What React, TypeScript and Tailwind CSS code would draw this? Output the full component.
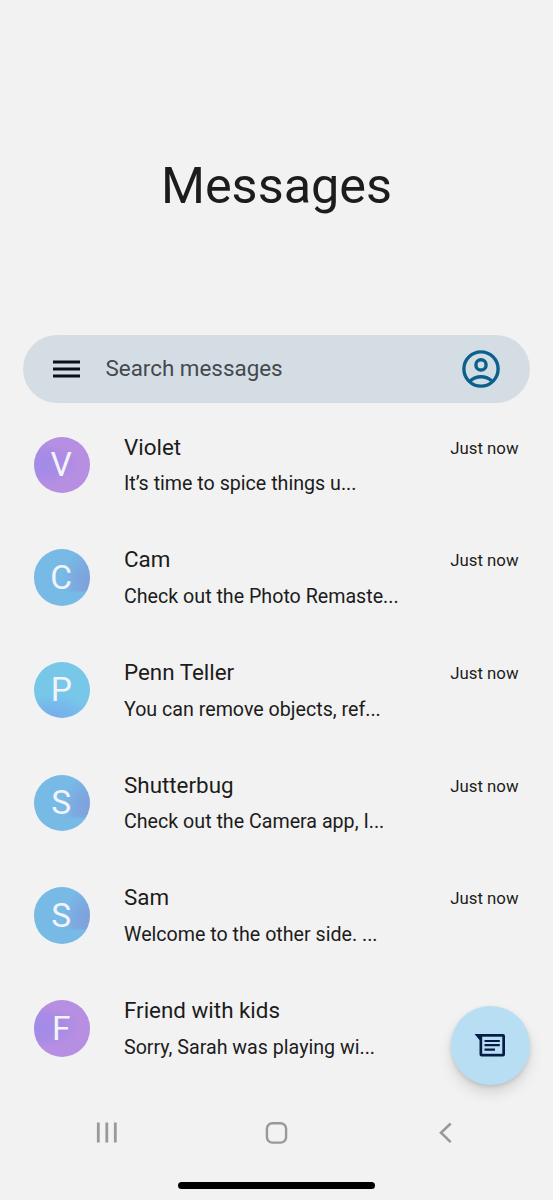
import React from 'react';

interface Conversation {
    name: string;
    preview: string;
    time?: string;
    tone: 'violet' | 'blue' | 'sky';
}

const CONVERSATIONS: Conversation[] = [
    { name: 'Violet', preview: 'It’s time to spice things u...', time: 'Just now', tone: 'violet' },
    { name: 'Cam', preview: 'Check out the Photo Remaste...', time: 'Just now', tone: 'blue' },
    { name: 'Penn Teller', preview: 'You can remove objects, ref...', time: 'Just now', tone: 'sky' },
    { name: 'Shutterbug', preview: 'Check out the Camera app, I...', time: 'Just now', tone: 'blue' },
    { name: 'Sam', preview: 'Welcome to the other side. ...', time: 'Just now', tone: 'blue' },
    { name: 'Friend with kids', preview: 'Sorry, Sarah was playing wi...', tone: 'violet' },
];

const TONES: Record<Conversation['tone'], string> = {
    violet: 'bg-[radial-gradient(ellipse_44px_22px_at_3px_27px,#a08ce8_0%,#a98be5_60%,#b78fe2_100%)]',
    blue: 'bg-[linear-gradient(to_bottom,transparent_42px,#77bae6_43px),radial-gradient(ellipse_28px_34px_at_56px_33px,#829fda_0%,#7ca9e0_50%,#77bae6_100%)]',
    sky: 'bg-[radial-gradient(ellipse_46px_26px_at_18px_58px,#79a9ed_0%,#77b5ec_45%,#77c7e9_100%)]',
};

function Avatar({ name, tone }: { name: string; tone: Conversation['tone'] }) {
    return (
        <div className={`mt-[3.3px] flex h-[56.5px] w-[56.5px] shrink-0 items-center justify-center rounded-full pr-px text-[33.5px] leading-none text-[#f3f3fb] ${TONES[tone]}`}>
            {name[0]}
        </div>
    );
}

function ConversationRow({ name, preview, time, tone }: Conversation) {
    return (
        <li className="flex h-[112.7px] items-start pr-[34.5px] pl-[33.5px]">
            <Avatar name={name} tone={tone} />
            <div className="ml-[34px] flex-1 whitespace-nowrap">
                <div className="pt-[0.4px] text-[22.4px] leading-[27px]">{name}</div>
                <div className="mt-[9.5px] text-[19.65px] leading-7">{preview}</div>
            </div>
            {time && <div className="pt-[0.3px] text-[16.8px] leading-7 whitespace-nowrap">{time}</div>}
        </li>
    );
}

function MenuIcon() {
    return (
        <svg className="h-[18px] w-[27px]" viewBox="0 0 27 18" stroke="#0b1016" strokeWidth="3">
            <path d="M0 2H27M0 9H27M0 16H27" />
        </svg>
    );
}

function AccountIcon() {
    return (
        <svg className="h-[38px] w-[38px]" viewBox="0 0 38 38" fill="none" stroke="#0b618c" strokeWidth="3.4">
            <circle cx="19" cy="19" r="17.1" />
            <circle cx="19" cy="14.9" r="5.1" />
            <path d="M7.6 31.4C14.2 25.2 23.8 25.2 30.4 31.4" />
        </svg>
    );
}

function ChatIcon() {
    return (
        <svg className="mr-[2px] h-6 w-8" viewBox="0 0 32 24" fill="none" stroke="#061c47">
            <path d="M0.5 1H29Q31 1 31 3V21.5Q31 23.5 29 23.5H7.5Q5.5 23.5 5.5 21.5V7Z" fill="#061c47" stroke="none" />
            <path d="M8.2 3.7H28.3V20.8H8.2Z" fill="#b8def3" stroke="none" />
            <path d="M10.5 8H25.8M10.5 12.2H25.8M10.5 16.6H21" strokeWidth="2.2" />
        </svg>
    );
}

function NavigationBar() {
    return (
        <nav className="flex h-[90px] flex-col items-center">
            <div className="mt-[11px] flex h-6 w-[363px] items-center justify-between">
                <svg className="h-6 w-6" viewBox="0 0 24 24" stroke="#999" strokeWidth="2.8">
                    <path d="M3.3 1.5V21.5M11.8 1.5V21.5M20.3 1.5V21.5" />
                </svg>
                <svg className="h-6 w-6" viewBox="0 0 24 24" fill="none" stroke="#999" strokeWidth="2.4">
                    <rect x="1.9" y="2.2" width="19.2" height="19.4" rx="5.5" />
                </svg>
                <svg className="h-6 w-6" viewBox="0 0 24 24" fill="none" stroke="#999" strokeWidth="2.6">
                    <path d="M16.7 2.5L7 11.8L16.7 21.1" />
                </svg>
            </div>
            <div className="mt-[36.5px] h-[7.5px] w-[197px] rounded-full bg-black" />
        </nav>
    );
}

export default function App() {
    return (
        <div className="relative flex h-[1200px] w-[553px] flex-col overflow-hidden bg-[#f2f2f2] font-['Roboto',sans-serif] text-[#1c1c1c]">
            <header className="flex h-[335px] justify-center pt-[156px]">
                <h1 className="h-[60px] text-[50.4px] leading-[60px]">Messages</h1>
            </header>

            <div className="mr-[23px] ml-[22.5px] flex h-[68px] shrink-0 items-center rounded-full bg-[#d5dde4] pr-[30px] pl-[30.5px]">
                <MenuIcon />
                <span className="-mt-px ml-[25.5px] flex-1 text-[22.4px] leading-[27px] text-[#43494e]">Search messages</span>
                <AccountIcon />
            </div>

            <ul className="h-[707px] shrink-0 overflow-hidden pt-[30.3px]">
                {CONVERSATIONS.map(item => (
                    <ConversationRow key={item.name} {...item} />
                ))}
            </ul>

            <NavigationBar />

            <button className="absolute top-[1005.5px] left-[451px] flex h-[79px] w-[79px] items-center justify-center rounded-full bg-[#b8def3] shadow-[0_8px_14px_rgba(0,0,0,0.12),0_2px_4px_rgba(0,0,0,0.12)]">
                <ChatIcon />
            </button>
        </div>
    );
}
